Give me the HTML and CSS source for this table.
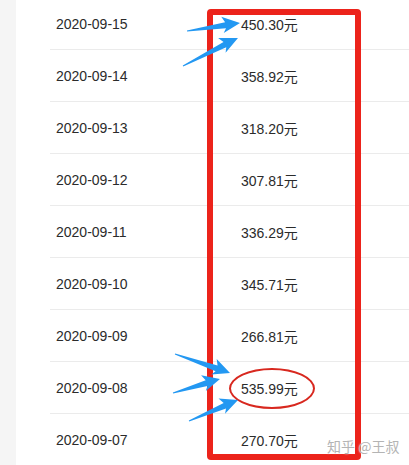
FILE: index.html
```html
<!DOCTYPE html>
<html lang="zh-CN">
<head>
  <meta charset="UTF-8" />
  <title>每日收益</title>
  <link rel="stylesheet" href="styles.css">
</head>
<body>
  <div class="page">
    <div class="side"></div>
    <div class="main">
      <ul class="list">
        <li class="row"><span class="date">2020-09-15</span><span class="amount">450.30元</span></li>
        <li class="row"><span class="date">2020-09-14</span><span class="amount">358.92元</span></li>
        <li class="row"><span class="date">2020-09-13</span><span class="amount">318.20元</span></li>
        <li class="row"><span class="date">2020-09-12</span><span class="amount">307.81元</span></li>
        <li class="row"><span class="date">2020-09-11</span><span class="amount">336.29元</span></li>
        <li class="row"><span class="date">2020-09-10</span><span class="amount">345.71元</span></li>
        <li class="row"><span class="date">2020-09-09</span><span class="amount">266.81元</span></li>
        <li class="row"><span class="date">2020-09-08</span><span class="amount">535.99元</span></li>
        <li class="row"><span class="date">2020-09-07</span><span class="amount">270.70元</span></li>
      </ul>
    </div>

    <!-- annotations drawn over the screenshot -->
    <div class="mark-box"></div>
    <div class="mark-ring"></div>
    <svg class="arrows" width="409" height="465" viewBox="0 0 409 465">
      <g fill="#2398f2">
        <polygon transform="translate(187 31) rotate(-8.6)" points="0,-0.5 39,-3 36,-9 53.6,0 36,7.5 39,3 0,0.5" />
        <polygon transform="translate(183 66) rotate(-27)" points="0,-0.5 47,-3 44,-9 61.7,0 44,7.5 47,3 0,0.5" />
        <polygon transform="translate(175 354) rotate(19.1)" points="0,-0.5 44,-3 41,-9 58.2,0 41,7.5 44,3 0,0.5" />
        <polygon transform="translate(173 393) rotate(-16.6)" points="0,-0.5 35,-3 32,-9 49,0 32,7.5 35,3 0,0.5" />
        <polygon transform="translate(189 421) rotate(-23.2)" points="0,-0.5 39,-3 36,-9 53.3,0 36,7.5 39,3 0,0.5" />
      </g>
    </svg>
    <div class="watermark">知乎 @王叔</div>
  </div>
</body>
</html>
```

FILE: styles.css
```css
body {
  margin: 0;
  background: #fff;
  font-family: Arial, "Liberation Sans", "Noto Sans CJK SC", sans-serif;
  overflow: hidden;
}
.page {
  position: relative;
  display: flex;
  width: 409px;
  height: 465px;
  overflow: hidden;
}
.side {
  width: 16px;
  flex: none;
  background: #f5f5f5;
}
.main {
  flex: 1;
  padding-left: 34px;
}
.list {
  list-style: none;
  margin: -2px 0 0;
  padding: 0;
}
.row {
  display: grid;
  grid-template-columns: 185px 1fr;
  align-items: center;
  height: 51px;
  padding-left: 6px;
  border-bottom: 1px solid #ebebeb;
  font-size: 14px;
  color: #2b2b2b;
}
/* annotations */
.mark-box {
  position: absolute;
  left: 207px;
  top: 9px;
  width: 154px;
  height: 451px;
  box-sizing: border-box;
  border: 6px solid #ec231b;
  border-radius: 4px;
}
.mark-ring {
  position: absolute;
  left: 229px;
  top: 368px;
  width: 86px;
  height: 41px;
  box-sizing: border-box;
  border: 2.5px solid #d8281f;
  border-radius: 50%;
}
.arrows {
  position: absolute;
  left: 0;
  top: 0;
}
.watermark {
  position: absolute;
  left: 327px;
  top: 436px;
  font-family: "Noto Sans CJK SC", sans-serif;
  font-size: 14px;
  line-height: 20px;
  color: #b4b4b4;
  text-shadow: 0 0 2px #fff;
  white-space: nowrap;
}
```
